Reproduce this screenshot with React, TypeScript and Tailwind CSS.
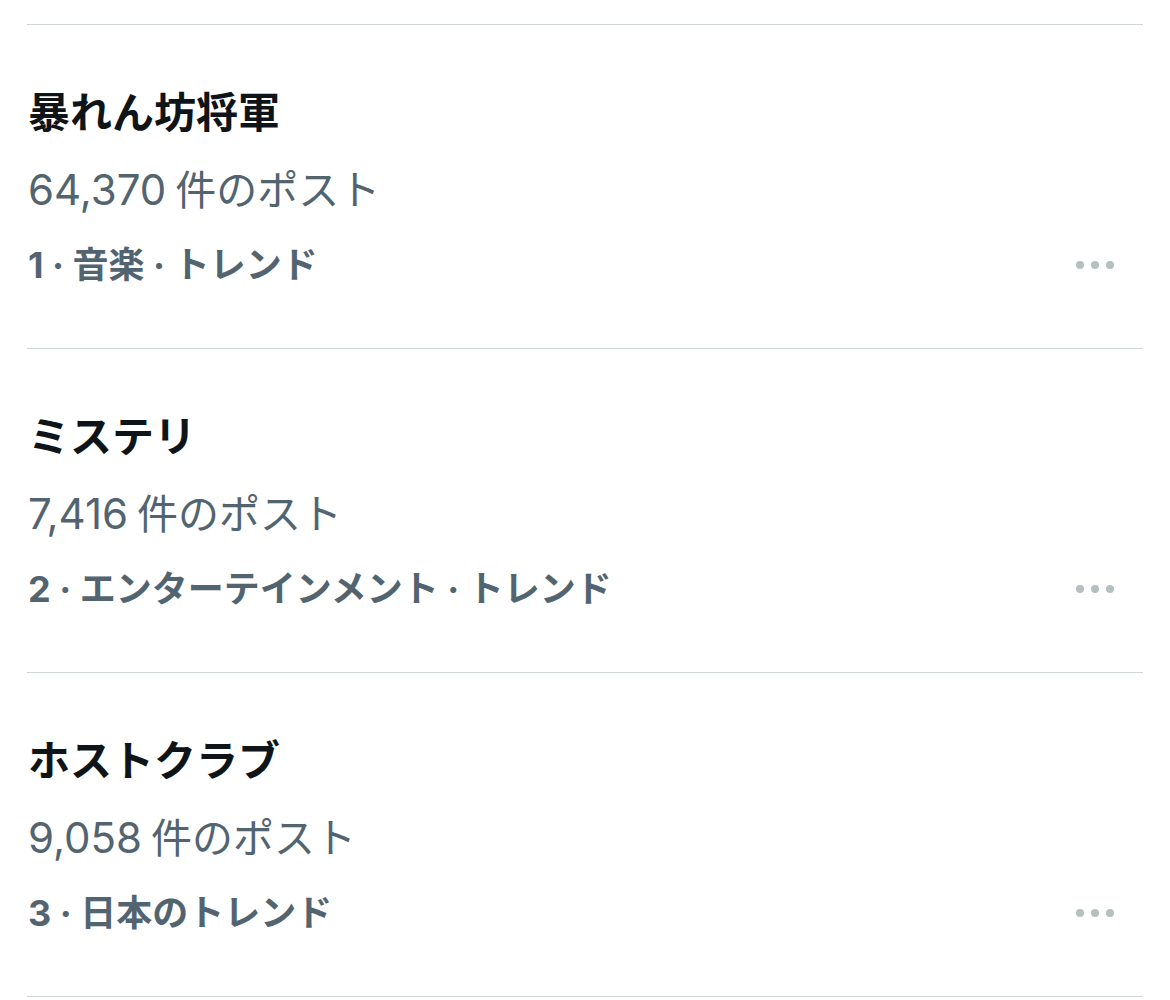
const trends = [
  { title: '暴れん坊将軍', count: '64,370', meta: '1 · 音楽 · トレンド' },
  { title: 'ミステリ', count: '7,416', meta: '2 · エンターテインメント · トレンド' },
  { title: 'ホストクラブ', count: '9,058', meta: '3 · 日本のトレンド' },
];

const font = '[font-family:Inter,"Noto_Sans_CJK_JP",sans-serif]';

function MoreDots() {
  return (
    <div className="flex items-center gap-[7px] pr-[29px]">
      <span className="h-[8px] w-[8px] rounded-full bg-[#b3c0bf]" />
      <span className="h-[8px] w-[8px] rounded-full bg-[#b3c0bf]" />
      <span className="h-[8px] w-[8px] rounded-full bg-[#b3c0bf]" />
    </div>
  );
}

export default function App() {
  return (
    <div className={`min-h-[1000px] bg-white pt-[24px] ${font}`}>
      <div className="mx-[27px] w-[1116px] border-t border-[#cfd4d7]">
        {trends.map((t) => (
          <div key={t.title} className="border-b border-[#cfd4d7] pb-[61px] pl-px pt-[64px]">
            <div className="text-[42px] font-bold leading-[48px] text-[#0f1419]">{t.title}</div>
            <div className="mt-[29px] text-[42px] leading-[48px] text-[#536471]">
              {t.count}
              <span className="ml-[9px] text-[41px]">件のポスト</span>
            </div>
            <div className="mt-[29px] flex items-center justify-between">
              <div className="text-[36px] font-bold leading-[44px] text-[#536471]">{t.meta}</div>
              <MoreDots />
            </div>
          </div>
        ))}
      </div>
    </div>
  );
}
